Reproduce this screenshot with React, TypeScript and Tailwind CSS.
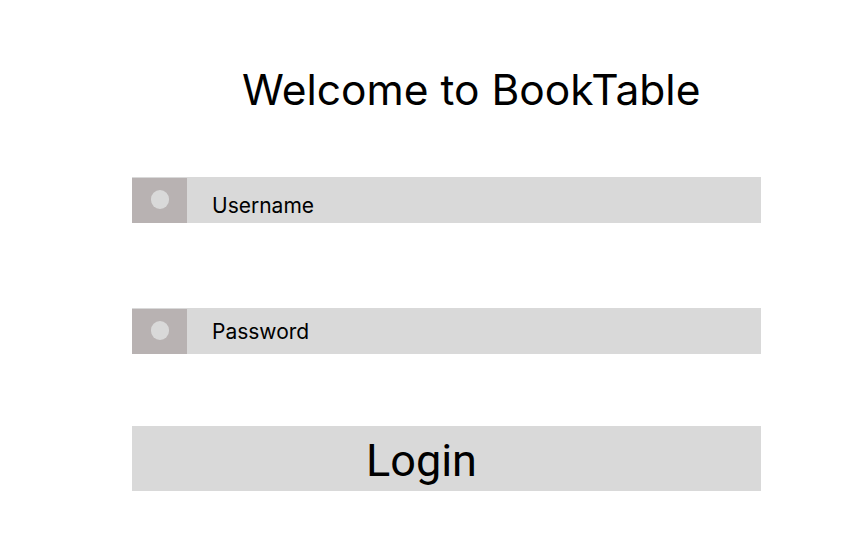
import React from 'react';

const Field = ({ label, offset }: { label: string; offset: string }) => {
    return (
        <div className="flex h-[46px] w-[629px] items-stretch bg-[#d9d9d9]">
            <div className="mt-[1px] flex w-[55px] items-center justify-center bg-[#b8b2b2]">
                <div className="mb-[2px] h-[19px] w-[18px] rounded-full bg-[#d9d9d9]" />
            </div>
            <span className={`flex items-center pl-[25px] text-[21px] text-black ${offset}`}>{label}</span>
        </div>
    );
};

export default function App() {
    return (
        <div className="h-[546px] w-[861px] bg-white font-['Inter',sans-serif]">
            <div className="flex flex-col pl-[132px]">
                <h1 className="mt-[62px] pl-[110px] text-[42.5px] leading-[56px] font-normal text-black">
                    Welcome to BookTable
                </h1>
                <div className="mt-[59px]">
                    <Field label="Username" offset="pt-[12px]" />
                </div>
                <div className="mt-[85px]">
                    <Field label="Password" offset="pt-[1px]" />
                </div>
                <button className="mt-[72px] flex h-[65px] w-[629px] items-center bg-[#d9d9d9] pl-[234px] pt-[4px] font-['Roboto',sans-serif] text-[45px] text-black">
                    Login
                </button>
            </div>
        </div>
    );
}
